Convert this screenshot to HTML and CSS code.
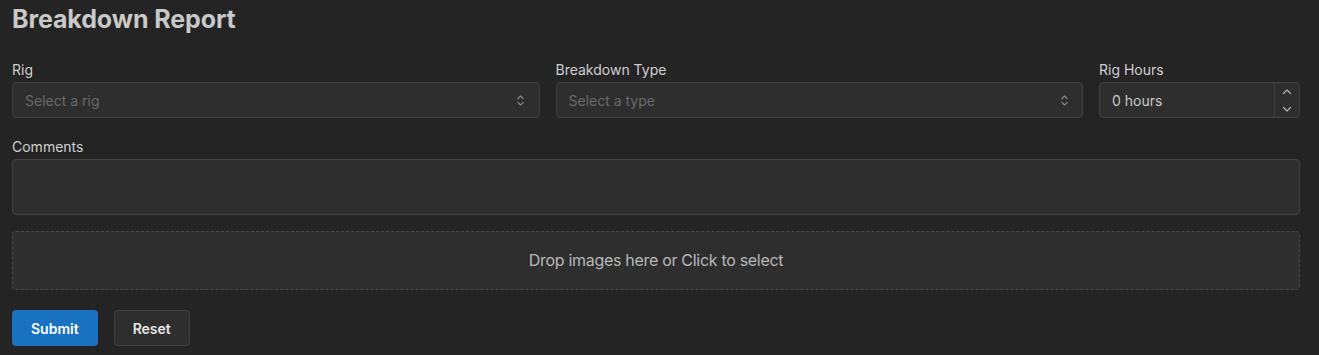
FILE: index.html
```html
<!DOCTYPE html>
<html>
<head>
	<meta charset="utf-8">
	<title>Breakdown Report</title>
	<link rel="stylesheet" href="styles.css">
</head>
<body>
	<div class="page">
		<h2 class="title">Breakdown Report</h2>

		<form class="report-form">
			<div class="row">
				<div class="field">
					<label class="label">Rig</label>
					<div class="input select">
						<span class="placeholder">Select a rig</span>
						<span class="chevron">
							<svg width="15" height="15" viewBox="0 0 15 15" fill="none">
								<path d="M4.9 5.6 7.5 3 10.1 5.6M4.9 9.4 7.5 12 10.1 9.4" stroke="#8a8a8a" stroke-width="1.1" stroke-linecap="round" stroke-linejoin="round"/>
							</svg>
						</span>
					</div>
				</div>

				<div class="field">
					<label class="label">Breakdown Type</label>
					<div class="input select">
						<span class="placeholder">Select a type</span>
						<span class="chevron">
							<svg width="15" height="15" viewBox="0 0 15 15" fill="none">
								<path d="M4.9 5.6 7.5 3 10.1 5.6M4.9 9.4 7.5 12 10.1 9.4" stroke="#8a8a8a" stroke-width="1.1" stroke-linecap="round" stroke-linejoin="round"/>
							</svg>
						</span>
					</div>
				</div>

				<div class="field">
					<label class="label">Rig Hours</label>
					<div class="input number">
						<span class="value">0 hours</span>
						<span class="spinner">
							<span class="step">
								<svg width="12" height="12" viewBox="0 0 12 12" fill="none">
									<path d="M2.5 7.5 6 4 9.5 7.5" stroke="#b5b5b5" stroke-width="1.2" stroke-linecap="round" stroke-linejoin="round"/>
								</svg>
							</span>
							<span class="step">
								<svg width="12" height="12" viewBox="0 0 12 12" fill="none">
									<path d="M2.5 4.5 6 8 9.5 4.5" stroke="#b5b5b5" stroke-width="1.2" stroke-linecap="round" stroke-linejoin="round"/>
								</svg>
							</span>
						</span>
					</div>
				</div>
			</div>

			<div class="field">
				<label class="label">Comments</label>
				<div class="input textarea"></div>
			</div>

			<div class="dropzone">Drop images here or Click to select</div>

			<div class="actions">
				<button type="button" class="btn btn-primary">Submit</button>
				<button type="button" class="btn btn-default">Reset</button>
			</div>
		</form>
	</div>
</body>
</html>
```

FILE: styles.css
```css
html, body {
	margin: 0;
	background-color: #242424;
}

body {
	font-family: Inter, "Noto Sans", sans-serif;
	color: #c9c9c9;
}

.page {
	padding: 2px 19px 0 12px;
}

.title {
	margin: 0;
	font-size: 25px;
	line-height: 35px;
	font-weight: 700;
	color: #c9c9c9;
	letter-spacing: -0.1px;
}

.report-form {
	display: flex;
	flex-direction: column;
	margin-top: 24px;
}

.row {
	display: grid;
	grid-template-columns: 1fr 1fr 201px;
	gap: 16px;
	margin-bottom: 20px;
}

.field {
	display: flex;
	flex-direction: column;
}

.label {
	font-size: 14px;
	line-height: 18px;
	margin-bottom: 3px;
	font-weight: 400;
	color: #d0d0d0;
}

.input {
	box-sizing: border-box;
	height: 36px;
	background-color: #2e2e2e;
	border: 1px solid #424242;
	border-radius: 4px;
	display: flex;
	align-items: center;
	font-size: 14px;
}

.select {
	padding-left: 12px;
	justify-content: space-between;
}

.placeholder {
	color: #696969;
}

.chevron {
	width: 36px;
	display: flex;
	justify-content: center;
	align-items: center;
}

.number {
	padding-left: 12px;
	justify-content: space-between;
}

.value {
	color: #c9c9c9;
}

.spinner {
	align-self: stretch;
	width: 24px;
	border-left: 1px solid #424242;
	display: flex;
	flex-direction: column;
}

.step {
	flex: 1;
	display: flex;
	justify-content: center;
	align-items: center;
}

.textarea {
	height: 56px;
}

.dropzone {
	box-sizing: border-box;
	margin-top: 16px;
	padding: 16px;
	border: 1px dashed #474747;
	border-radius: 4px;
	background-color: #2e2e2e;
	text-align: center;
	font-size: 16px;
	line-height: 25px;
	color: #b8b8b8;
	letter-spacing: -0.3px;
}

.actions {
	display: flex;
	gap: 16px;
	margin-top: 20px;
}

.btn {
	box-sizing: border-box;
	height: 36px;
	padding: 0 18px;
	border-radius: 4px;
	font-family: Inter, "Noto Sans", sans-serif;
	font-size: 14px;
	font-weight: 600;
	color: #ffffff;
	cursor: pointer;
}

.btn-primary {
	background-color: #1971c2;
	border: 1px solid transparent;
}

.btn-default {
	background-color: #2e2e2e;
	border: 1px solid #424242;
	color: #e9e9e9;
}
```
